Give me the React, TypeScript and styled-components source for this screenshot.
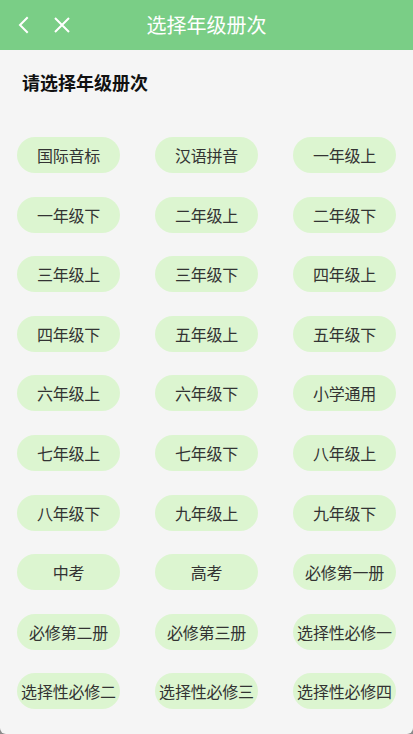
import styled, { createGlobalStyle } from "styled-components";

const GlobalStyle = createGlobalStyle`
  html, body {
    margin: 0;
    padding: 0;
    background: #8a8a8a;
  }
  body {
    font-family: "Noto Sans CJK SC", "Noto Sans", sans-serif;
  }
`;

const grades = [
  "国际音标", "汉语拼音", "一年级上",
  "一年级下", "二年级上", "二年级下",
  "三年级上", "三年级下", "四年级上",
  "四年级下", "五年级上", "五年级下",
  "六年级上", "六年级下", "小学通用",
  "七年级上", "七年级下", "八年级上",
  "八年级下", "九年级上", "九年级下",
  "中考", "高考", "必修第一册",
  "必修第二册", "必修第三册", "选择性必修一",
  "选择性必修二", "选择性必修三", "选择性必修四",
];

export default function App() {
  return (
    <>
      <GlobalStyle />
      <Page>
        <Header>
          <HeaderIcons>
            <IconButton aria-label="back">
              <svg width="12" height="18" viewBox="0 0 12 18">
                <path d="M10 2 L3 9 L10 16" fill="none" stroke="#fff" strokeWidth="2" strokeLinecap="square" />
              </svg>
            </IconButton>
            <IconButton aria-label="close">
              <svg width="18" height="18" viewBox="0 0 18 18">
                <path d="M2 2 L16 16 M16 2 L2 16" fill="none" stroke="#fff" strokeWidth="2" />
              </svg>
            </IconButton>
          </HeaderIcons>
          <Title>选择年级册次</Title>
          <span />
        </Header>
        <SubTitle>请选择年级册次</SubTitle>
        <Grid>
          {grades.map((g) => (
            <GradeButton key={g}>{g}</GradeButton>
          ))}
        </Grid>
      </Page>
    </>
  );
}

const Page = styled.div`
  height: 734px;
  background: #f5f5f5;
  border-radius: 0 0 6px 6px;
  overflow: hidden;
`;

const Header = styled.div`
  height: 50px;
  background: #7ace86;
  display: grid;
  grid-template-columns: 1fr auto 1fr;
  align-items: center;
`;

const HeaderIcons = styled.div`
  display: flex;
  align-items: center;
  gap: 24px;
  padding-left: 17px;
`;

const IconButton = styled.div`
  display: flex;
  align-items: center;
  justify-content: center;
`;

const Title = styled.div`
  color: #fff;
  font-size: 20px;
  line-height: 28px;
  margin-top: -1px;
`;

const SubTitle = styled.div`
  padding: 19px 22px 0;
  font-size: 18px;
  line-height: 26px;
  font-weight: 700;
  color: #111;
`;

const Grid = styled.div`
  display: grid;
  grid-template-columns: repeat(3, 1fr);
  column-gap: 35px;
  row-gap: 23.6px;
  padding: 42px 17px 0;
`;

const GradeButton = styled.div`
  height: 36px;
  border-radius: 18px;
  background: #dcf5d0;
  color: #333;
  font-size: 16px;
  display: flex;
  align-items: center;
  justify-content: center;
  white-space: nowrap;
  letter-spacing: -0.2px;
`;
